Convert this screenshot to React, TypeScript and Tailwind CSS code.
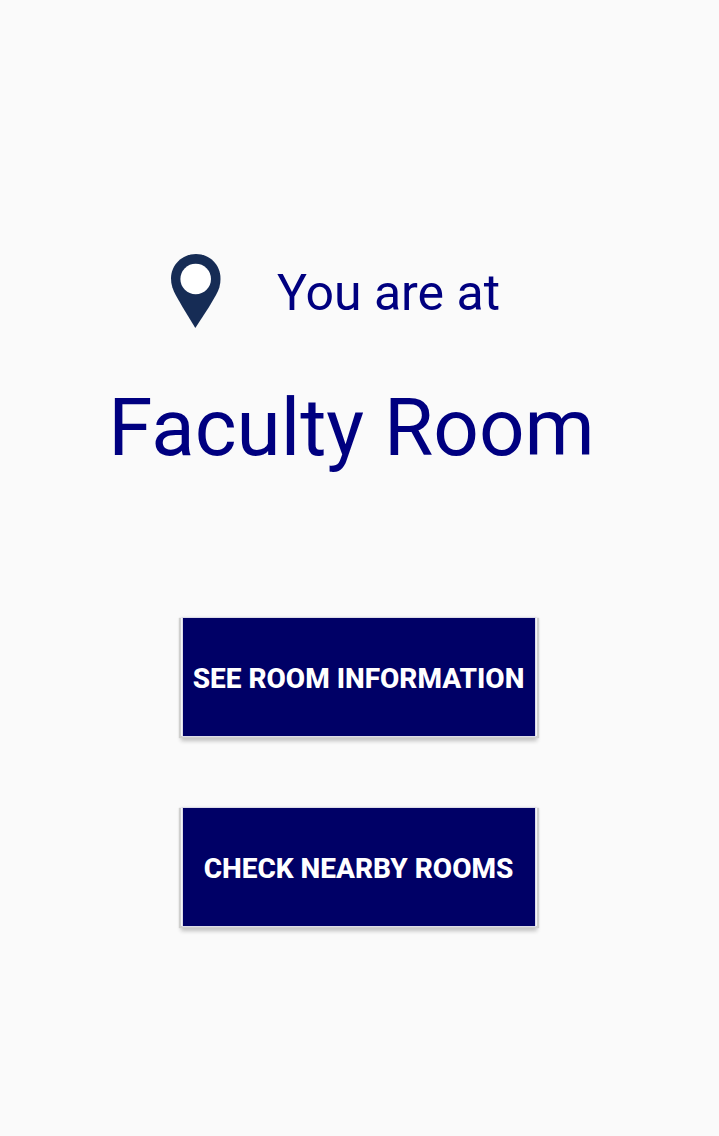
const actions = ["See room information", "Check nearby rooms"];

function PinIcon() {
  return (
    <svg viewBox="0 0 50 74" className="h-[74px] w-[50px] shrink-0" aria-hidden="true">
      <path
        fill="#162c55"
        d="M25 0C11 0 0 11 0 24.500C0 31 2 36 4.700 41L11.500 53L24.300 74L38 53L45 41C48 35.500 49.500 31 49.500 24.500C49.500 11 39 0 25 0Z"
      />
      <circle cx="24.700" cy="25" r="15.300" fill="#ffffff" />
    </svg>
  );
}

export default function App() {
  return (
    <main className="flex min-h-screen flex-col items-center bg-[#fafafa] pt-[254px] pb-12 font-['Roboto',sans-serif] text-[#000080]">
      <div className="flex items-center gap-14 pr-12">
        <PinIcon />
        <p className="pt-1 text-[50px] leading-[60px]">You are at</p>
      </div>
      <h1 className="mt-[52px] pr-4 text-[80px] leading-[96px]">Faculty Room</h1>
      <div className="mt-[142px] mr-0.5 flex w-[352px] flex-col gap-[72px]">
        {actions.map((label) => (
          <button
            key={label}
            type="button"
            className="h-[118px] w-full bg-[#000066] pt-1 text-[28px] leading-8 font-extrabold whitespace-nowrap text-white uppercase shadow-[0_0_0_1px_#dcdce8,2px_0_0_#f4f4f8,-2px_0_0_#f4f4f8,3px_1px_1px_1px_#d0d0ce,-3px_1px_1px_1px_#d0d0ce,0_3px_4px_2px_#c0c0c0]"
          >
            {label}
          </button>
        ))}
      </div>
    </main>
  );
}
